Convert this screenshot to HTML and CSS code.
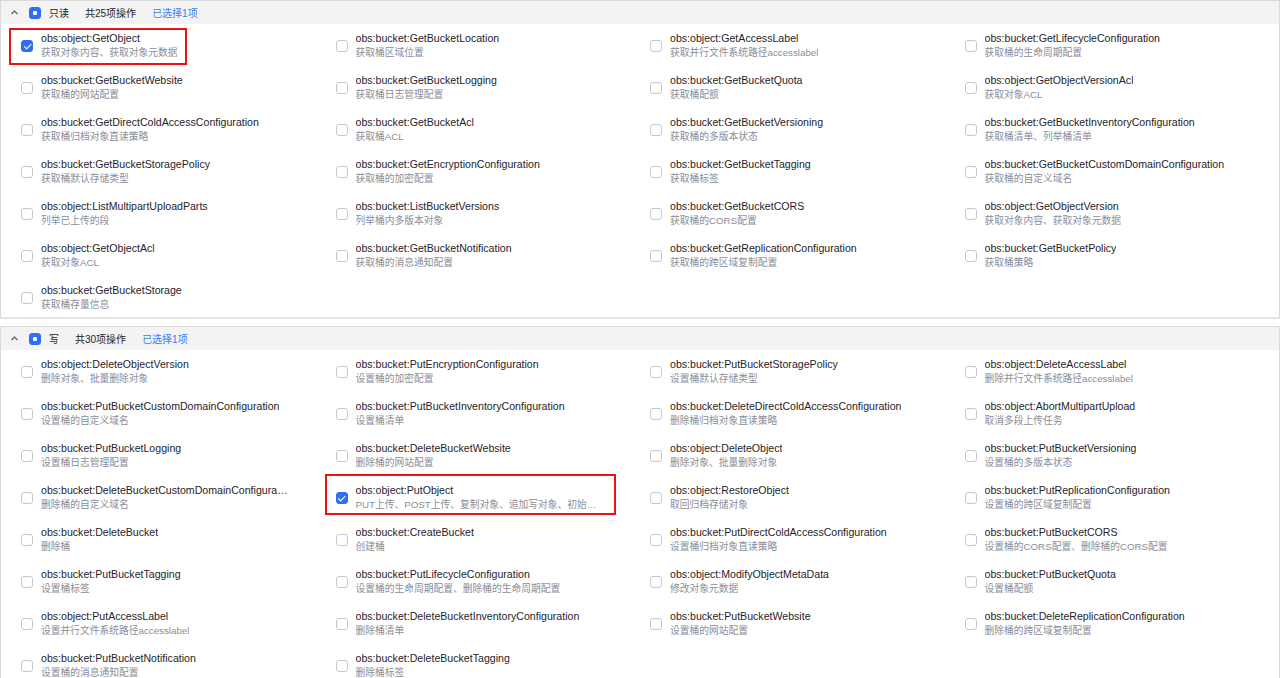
FILE: index.html
```html
<!DOCTYPE html>
<html lang="zh-CN">
<head>
  <meta charset="UTF-8">
  <meta name="viewport" content="width=device-width, initial-scale=1.0">
  <title>OBS 操作权限</title>
  <link rel="stylesheet" href="styles.css">
</head>
<body>
  <!-- 只读 -->
  <div class="panel" id="panel-read">
    <div class="panel-head">
      <svg class="chevron" width="7" height="5" viewBox="0 0 7 5"><polyline points="0.5,4 3.5,1 6.5,4" fill="none" stroke="#575d6c" stroke-width="1.2"/></svg>
      <span class="cb cb-part"></span>
      <span class="group-name">只读</span>
      <span class="group-count">共25项操作</span>
      <span class="group-sel">已选择1项</span>
    </div>
    <div class="action-grid" id="read-grid"></div>
  </div>

  <!-- 写 -->
  <div class="panel" id="panel-write">
    <div class="panel-head">
      <svg class="chevron" width="7" height="5" viewBox="0 0 7 5"><polyline points="0.5,4 3.5,1 6.5,4" fill="none" stroke="#575d6c" stroke-width="1.2"/></svg>
      <span class="cb cb-part"></span>
      <span class="group-name">写</span>
      <span class="group-count">共30项操作</span>
      <span class="group-sel">已选择1项</span>
    </div>
    <div class="action-grid" id="write-grid"></div>
  </div>

  <script>
    const readActions = [
      ["obs:object:GetObject", "获取对象内容、获取对象元数据", "mark-1"],
      ["obs:bucket:GetBucketLocation", "获取桶区域位置"],
      ["obs:object:GetAccessLabel", "获取并行文件系统路径accesslabel"],
      ["obs:bucket:GetLifecycleConfiguration", "获取桶的生命周期配置"],
      ["obs:bucket:GetBucketWebsite", "获取桶的网站配置"],
      ["obs:bucket:GetBucketLogging", "获取桶日志管理配置"],
      ["obs:bucket:GetBucketQuota", "获取桶配额"],
      ["obs:object:GetObjectVersionAcl", "获取对象ACL"],
      ["obs:bucket:GetDirectColdAccessConfiguration", "获取桶归档对象直读策略"],
      ["obs:bucket:GetBucketAcl", "获取桶ACL"],
      ["obs:bucket:GetBucketVersioning", "获取桶的多版本状态"],
      ["obs:bucket:GetBucketInventoryConfiguration", "获取桶清单、列举桶清单"],
      ["obs:bucket:GetBucketStoragePolicy", "获取桶默认存储类型"],
      ["obs:bucket:GetEncryptionConfiguration", "获取桶的加密配置"],
      ["obs:bucket:GetBucketTagging", "获取桶标签"],
      ["obs:bucket:GetBucketCustomDomainConfiguration", "获取桶的自定义域名"],
      ["obs:object:ListMultipartUploadParts", "列举已上传的段"],
      ["obs:bucket:ListBucketVersions", "列举桶内多版本对象"],
      ["obs:bucket:GetBucketCORS", "获取桶的CORS配置"],
      ["obs:object:GetObjectVersion", "获取对象内容、获取对象元数据"],
      ["obs:object:GetObjectAcl", "获取对象ACL"],
      ["obs:bucket:GetBucketNotification", "获取桶的消息通知配置"],
      ["obs:bucket:GetReplicationConfiguration", "获取桶的跨区域复制配置"],
      ["obs:bucket:GetBucketPolicy", "获取桶策略"],
      ["obs:bucket:GetBucketStorage", "获取桶存量信息"]
    ];

    const writeActions = [
      ["obs:object:DeleteObjectVersion", "删除对象、批量删除对象"],
      ["obs:bucket:PutEncryptionConfiguration", "设置桶的加密配置"],
      ["obs:bucket:PutBucketStoragePolicy", "设置桶默认存储类型"],
      ["obs:object:DeleteAccessLabel", "删除并行文件系统路径accesslabel"],
      ["obs:bucket:PutBucketCustomDomainConfiguration", "设置桶的自定义域名"],
      ["obs:bucket:PutBucketInventoryConfiguration", "设置桶清单"],
      ["obs:bucket:DeleteDirectColdAccessConfiguration", "删除桶归档对象直读策略"],
      ["obs:object:AbortMultipartUpload", "取消多段上传任务"],
      ["obs:bucket:PutBucketLogging", "设置桶日志管理配置"],
      ["obs:bucket:DeleteBucketWebsite", "删除桶的网站配置"],
      ["obs:object:DeleteObject", "删除对象、批量删除对象"],
      ["obs:bucket:PutBucketVersioning", "设置桶的多版本状态"],
      ["obs:bucket:DeleteBucketCustomDomainConfiguration", "删除桶的自定义域名"],
      ["obs:object:PutObject", "PUT上传、POST上传、复制对象、追加写对象、初始化上传段任务、上传段、合并段", "mark-2"],
      ["obs:object:RestoreObject", "取回归档存储对象"],
      ["obs:bucket:PutReplicationConfiguration", "设置桶的跨区域复制配置"],
      ["obs:bucket:DeleteBucket", "删除桶"],
      ["obs:bucket:CreateBucket", "创建桶"],
      ["obs:bucket:PutDirectColdAccessConfiguration", "设置桶归档对象直读策略"],
      ["obs:bucket:PutBucketCORS", "设置桶的CORS配置、删除桶的CORS配置"],
      ["obs:bucket:PutBucketTagging", "设置桶标签"],
      ["obs:bucket:PutLifecycleConfiguration", "设置桶的生命周期配置、删除桶的生命周期配置"],
      ["obs:object:ModifyObjectMetaData", "修改对象元数据"],
      ["obs:bucket:PutBucketQuota", "设置桶配额"],
      ["obs:object:PutAccessLabel", "设置并行文件系统路径accesslabel"],
      ["obs:bucket:DeleteBucketInventoryConfiguration", "删除桶清单"],
      ["obs:bucket:PutBucketWebsite", "设置桶的网站配置"],
      ["obs:bucket:DeleteReplicationConfiguration", "删除桶的跨区域复制配置"],
      ["obs:bucket:PutBucketNotification", "设置桶的消息通知配置"],
      ["obs:bucket:DeleteBucketTagging", "删除桶标签"]
    ];

    // Render one group of actions into its grid
    function renderActions(gridId, actions) {
      const grid = document.getElementById(gridId);
      actions.forEach(action => {
        const [name, desc, mark] = action;
        const item = document.createElement("div");
        item.className = "action" + (mark ? " mark " + mark : "");
        item.innerHTML = `
          <span class="cb${mark ? " cb-on" : ""}"></span>
          <div class="action-text">
            <div class="action-name">${name}</div>
            <div class="action-desc">${desc}</div>
          </div>
        `;
        grid.appendChild(item);
      });
    }

    renderActions("read-grid", readActions);
    renderActions("write-grid", writeActions);
  </script>
</body>
</html>
```

FILE: styles.css
```css
body {
  margin: 0;
  padding: 0;
  background-color: #ffffff;
  font-family: 'Liberation Sans', Arial, 'Noto Sans CJK SC', sans-serif;
  color: #252b3a;
}

.panel {
  border: 1px solid #d9d9d9;
  border-bottom: 2px solid #e4e4e4;
  margin-bottom: 7px;
}

.panel-head {
  display: flex;
  align-items: center;
  height: 23px;
  padding-left: 10px;
  background-color: #f3f3f3;
  font-size: 10px;
  color: #1f2329;
}

.chevron {
  margin-right: 11px;
}

.group-name {
  margin-left: 8px;
  margin-right: 16px;
}

.group-count {
  margin-right: 16px;
}

.group-sel {
  color: #3a7cf6;
}

/* checkbox */
.cb {
  position: relative;
  flex: none;
  width: 12px;
  height: 12px;
  box-sizing: border-box;
  border: 1px solid #c6c8cc;
  border-radius: 3px;
  background-color: #ffffff;
}

.cb-on,
.cb-part {
  border-color: #2f6df6;
  background-color: #2f6df6;
}

.cb-part::after {
  content: "";
  position: absolute;
  left: 3px;
  top: 3px;
  width: 4px;
  height: 4px;
  border-radius: 1px;
  background-color: #ffffff;
}

.cb-on::after {
  content: "";
  position: absolute;
  left: 3.5px;
  top: 1.2px;
  width: 2.5px;
  height: 5.5px;
  border-right: 1.4px solid #ffffff;
  border-bottom: 1.4px solid #ffffff;
  transform: rotate(45deg);
}

.action-grid {
  display: grid;
  grid-template-columns: repeat(4, 1fr);
  row-gap: 15px;
  padding: 8px 0 6px 20px;
}

.action {
  position: relative;
  display: flex;
  align-items: center;
  gap: 8px;
}

.action-text {
  min-width: 0;
  max-width: 248px;
}

.action-name,
.action-desc {
  white-space: nowrap;
  overflow: hidden;
  text-overflow: ellipsis;
  line-height: 13.5px;
}

.action-name {
  font-size: 10.6px;
  color: #1f2329;
}

.action-desc {
  font-size: 9.75px;
  color: #8a8e99;
}

/* red annotation frames */
.mark::after {
  content: "";
  position: absolute;
  border: 2px solid #ee1111;
  pointer-events: none;
}

.mark-1::after {
  left: -12px;
  top: -4px;
  width: 174px;
  height: 33px;
}

.mark-2::after {
  left: -11px;
  top: -10px;
  width: 287px;
  height: 37px;
}
```
